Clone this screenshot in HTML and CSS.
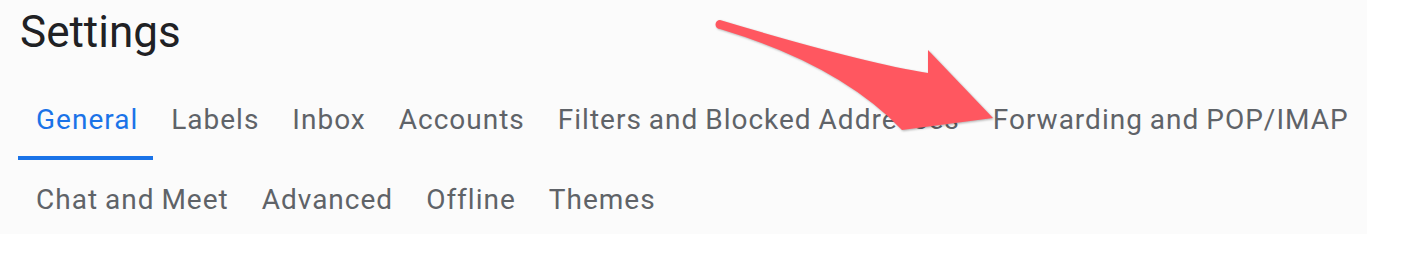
FILE: index.html
```html
<!DOCTYPE html>
<html>
<head>
<meta charset="utf-8">
<link rel="stylesheet" href="styles.css">
</head>
<body>
<div class="page">
  <h1 class="title">Settings</h1>
  <div class="tabs">
    <div class="tab active">General</div>
    <div class="tab">Labels</div>
    <div class="tab">Inbox</div>
    <div class="tab">Accounts</div>
    <div class="tab">Filters and Blocked Addresses</div>
    <div class="tab">Forwarding and POP/IMAP</div>
  </div>
  <div class="tabs">
    <div class="tab">Chat and Meet</div>
    <div class="tab">Advanced</div>
    <div class="tab">Offline</div>
    <div class="tab">Themes</div>
  </div>
</div>
<svg class="arrow" width="1408" height="276" viewBox="0 0 1408 276">
  <path d="M 720 20 Q 860 62 928 73 L 928 50 L 993 118 L 902 130 Q 840 65 720 29 A 4.5 4.5 0 0 1 720 20 Z" fill="#ff5760"/>
</svg>
</body>
</html>
```
FILE: styles.css
```css
html, body {
  margin: 0;
  padding: 0;
  background: #ffffff;
}
body {
  position: relative;
  width: 1408px;
  height: 276px;
  overflow: hidden;
  font-family: Roboto, "Liberation Sans", sans-serif;
}
.page {
  width: 1367px;
  height: 234px;
  background: #fbfbfb;
}
.title {
  margin: 0;
  padding: 6px 0 0 20px;
  height: 74px;
  font-size: 44px;
  font-weight: 400;
  line-height: 52px;
  color: #202124;
}
.tabs {
  display: flex;
  padding-left: 18px;
}
.tab {
  height: 80px;
  display: flex;
  align-items: center;
  padding: 0 15px 0 18px;
  font-size: 28px;
  line-height: 32px;
  letter-spacing: 1px;
  word-spacing: -1px;
  color: #5f6368;
  white-space: nowrap;
}
.tab.active {
  color: #1a73e8;
  box-shadow: inset 0 -4px 0 #1a73e8;
}
.arrow {
  position: absolute;
  left: 0;
  top: 0;
  pointer-events: none;
  filter: drop-shadow(1px 1.5px 1px rgba(0,0,0,0.3));
}
```
